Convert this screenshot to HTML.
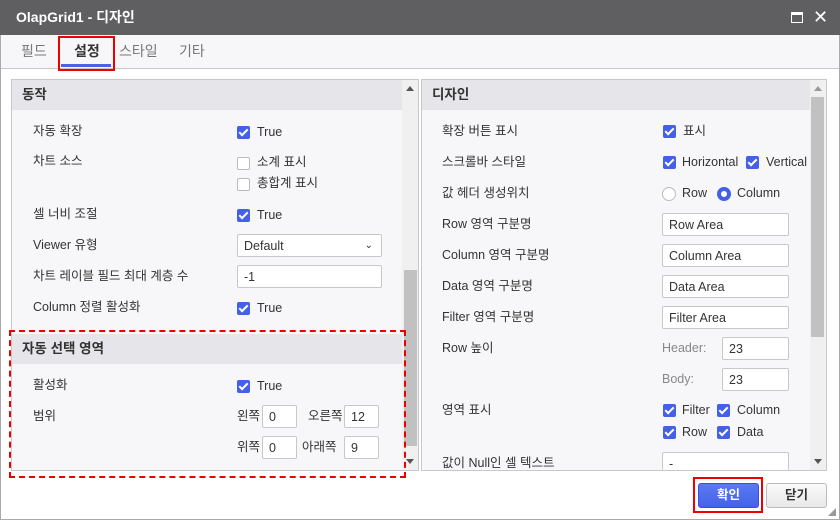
<!DOCTYPE html>
<html><head><meta charset="utf-8"><style>
*{box-sizing:border-box;margin:0;padding:0}
body{width:840px;height:520px;background:#fff;font-family:"Liberation Sans","Noto Sans CJK KR",sans-serif;font-size:12.5px;line-height:15px;color:#333;position:relative;overflow:hidden}
.a{position:absolute}
.win{left:0;top:0;width:840px;height:520px;border:1px solid #aaa}
.title{left:0;top:0;width:840px;height:35px;background:#5f5f61;color:#fff;font-weight:bold;font-size:14px;line-height:35px;padding-left:16px}
.tabs{left:1px;top:35px;width:838px;height:34px;background:#f7f7f9;border-bottom:1px solid #c8c8c8}
.tab{top:43px;font-size:14px;line-height:16px;color:#777}
.panel{background:#f7f7f9;border:1px solid #c8c8c8}
.hdr{background:#e6e6ea;font-weight:bold;font-size:13.5px;color:#333;padding-left:10px;line-height:30px;height:30px}
.sb{background:#f0f0f0}
.thumb{background:#c1c1c1}
.lbl{font-size:12.5px;line-height:15px;color:#333}
.cb{width:13px;height:13px;border-radius:2px;background:#4460e6;display:inline-block;position:absolute}
.cb:after{content:"";position:absolute;left:4px;top:1px;width:3px;height:7px;border:solid #fff;border-width:0 2px 2px 0;transform:rotate(45deg)}
.cbo{width:13px;height:13px;border-radius:2px;border:1px solid #bbb;background:#fff;position:absolute}
.inp{background:#fff;border:1px solid #c8c8c8;border-radius:2px;height:23px;line-height:22px;padding-left:6px;font-size:12.5px;color:#333}
</style></head><body>
<div class="a win"></div>
<div class="a title">OlapGrid1 - 디자인</div>
<div class="a" style="left:791px;top:12px;width:12px;height:11px;border:1.5px solid #fff;border-top-width:3px"></div>
<div class="a" style="left:813px;top:6px;color:#fff;font-size:18px;line-height:22px">✕</div>
<div class="a tabs"></div>
<div class="a tab" style="left:21px">필드</div>
<div class="a tab" style="left:74px;color:#333;font-weight:bold">설정</div>
<div class="a" style="left:61px;top:64px;width:50px;height:3px;background:#4a63e6"></div>
<div class="a" style="left:58px;top:36px;width:57px;height:35px;border:2px solid #e00"></div>
<div class="a tab" style="left:119px">스타일</div>
<div class="a tab" style="left:179px">기타</div>

<!-- left panel -->
<div class="a panel" style="left:11px;top:79px;width:408px;height:392px"></div>
<div class="a hdr" style="left:12px;top:80px;width:390px">동작</div>
<div class="a sb" style="left:402px;top:80px;width:16px;height:390px"></div>
<div class="a thumb" style="left:404px;top:270px;width:13px;height:176px"></div>
<div class="a" style="left:406px;top:86px;border:4px solid transparent;border-bottom:5px solid #555;border-top:0"></div>
<div class="a" style="left:406px;top:459px;border:4px solid transparent;border-top:5px solid #555;border-bottom:0"></div>

<div class="a lbl" style="left:33px;top:124px">자동 확장</div>
<div class="cb" style="left:237px;top:126px"></div><div class="a lbl" style="left:257px;top:125px">True</div>
<div class="a lbl" style="left:33px;top:154px">차트 소스</div>
<div class="cbo" style="left:237px;top:157px"></div><div class="a lbl" style="left:257px;top:155px">소계 표시</div>
<div class="cbo" style="left:237px;top:178px"></div><div class="a lbl" style="left:257px;top:176px">총합계 표시</div>
<div class="a lbl" style="left:33px;top:207px">셀 너비 조절</div>
<div class="cb" style="left:237px;top:209px"></div><div class="a lbl" style="left:257px;top:208px">True</div>
<div class="a lbl" style="left:33px;top:238px">Viewer 유형</div>
<div class="a inp" style="left:237px;top:234px;width:145px">Default<span style="position:absolute;right:8px;top:0;font-size:10px">&#8964;</span></div>
<div class="a lbl" style="left:33px;top:269px">차트 레이블 필드 최대 계층 수</div>
<div class="a inp" style="left:237px;top:265px;width:145px">-1</div>
<div class="a lbl" style="left:33px;top:300px">Column 정렬 활성화</div>
<div class="cb" style="left:237px;top:302px"></div><div class="a lbl" style="left:257px;top:301px">True</div>

<div class="a hdr" style="left:12px;top:334px;width:390px">자동 선택 영역</div>
<div class="a lbl" style="left:33px;top:378px">활성화</div>
<div class="cb" style="left:237px;top:380px"></div><div class="a lbl" style="left:257px;top:379px">True</div>
<div class="a lbl" style="left:33px;top:409px">범위</div>
<div class="a lbl" style="left:237px;top:409px">왼쪽</div>
<div class="a inp" style="left:262px;top:405px;width:35px">0</div>
<div class="a lbl" style="left:308px;top:409px">오른쪽</div>
<div class="a inp" style="left:344px;top:405px;width:35px">12</div>
<div class="a lbl" style="left:237px;top:440px">위쪽</div>
<div class="a inp" style="left:262px;top:436px;width:35px">0</div>
<div class="a lbl" style="left:302px;top:440px">아래쪽</div>
<div class="a inp" style="left:344px;top:436px;width:35px">9</div>
<div class="a" style="left:9px;top:330px;width:397px;height:148px;border:2px dashed #e00"></div>

<!-- right panel -->
<div class="a panel" style="left:421px;top:79px;width:406px;height:392px"></div>
<div class="a hdr" style="left:422px;top:80px;width:388px">디자인</div>
<div class="a sb" style="left:810px;top:80px;width:16px;height:390px"></div>
<div class="a thumb" style="left:811px;top:97px;width:13px;height:240px"></div>
<div class="a" style="left:814px;top:86px;border:4px solid transparent;border-bottom:5px solid #999;border-top:0"></div>
<div class="a" style="left:814px;top:459px;border:4px solid transparent;border-top:5px solid #555;border-bottom:0"></div>

<div class="a lbl" style="left:442px;top:124px">확장 버튼 표시</div>
<div class="cb" style="left:663px;top:125px"></div><div class="a lbl" style="left:683px;top:124px">표시</div>
<div class="a lbl" style="left:442px;top:155px">스크롤바 스타일</div>
<div class="cb" style="left:663px;top:156px"></div><div class="a lbl" style="left:682px;top:155px">Horizontal</div>
<div class="cb" style="left:746px;top:156px"></div><div class="a lbl" style="left:766px;top:155px">Vertical</div>
<div class="a lbl" style="left:442px;top:186px">값 헤더 생성위치</div>
<div class="a" style="left:662px;top:187px;width:14px;height:14px;border:1px solid #bbb;border-radius:50%;background:#fff"></div>
<div class="a lbl" style="left:682px;top:186px">Row</div>
<div class="a" style="left:717px;top:187px;width:14px;height:14px;border:4px solid #4460e6;border-radius:50%;background:#fff"></div>
<div class="a lbl" style="left:737px;top:186px">Column</div>
<div class="a lbl" style="left:442px;top:217px">Row 영역 구분명</div>
<div class="a inp" style="left:662px;top:213px;width:127px">Row Area</div>
<div class="a lbl" style="left:442px;top:248px">Column 영역 구분명</div>
<div class="a inp" style="left:662px;top:244px;width:127px">Column Area</div>
<div class="a lbl" style="left:442px;top:279px">Data 영역 구분명</div>
<div class="a inp" style="left:662px;top:275px;width:127px">Data Area</div>
<div class="a lbl" style="left:442px;top:310px">Filter 영역 구분명</div>
<div class="a inp" style="left:662px;top:306px;width:127px">Filter Area</div>
<div class="a lbl" style="left:442px;top:341px">Row 높이</div>
<div class="a lbl" style="left:662px;top:341px;color:#888">Header:</div>
<div class="a inp" style="left:722px;top:337px;width:67px">23</div>
<div class="a lbl" style="left:662px;top:372px;color:#888">Body:</div>
<div class="a inp" style="left:722px;top:368px;width:67px">23</div>
<div class="a lbl" style="left:442px;top:403px">영역 표시</div>
<div class="cb" style="left:663px;top:404px"></div><div class="a lbl" style="left:682px;top:403px">Filter</div>
<div class="cb" style="left:717px;top:404px"></div><div class="a lbl" style="left:737px;top:403px">Column</div>
<div class="cb" style="left:663px;top:426px"></div><div class="a lbl" style="left:682px;top:425px">Row</div>
<div class="cb" style="left:717px;top:426px"></div><div class="a lbl" style="left:737px;top:425px">Data</div>
<div class="a lbl" style="left:442px;top:456px;height:14px;overflow:hidden">값이 Null인 셀 텍스트</div>
<div class="a inp" style="left:662px;top:452px;width:127px;height:18px;border-bottom:0">-</div>

<!-- buttons -->
<div class="a" style="left:698px;top:483px;width:61px;height:25px;border-radius:3px;background:linear-gradient(#5a7af5,#4462e8);border:1px solid #3552d0;color:#fff;font-weight:bold;text-align:center;line-height:23px">확인</div>
<div class="a" style="left:693px;top:477px;width:70px;height:36px;border:2px solid #e00"></div>
<div class="a" style="left:766px;top:483px;width:61px;height:25px;border-radius:3px;background:linear-gradient(#fafafa,#e8e8e8);border:1px solid #bbb;color:#333;font-weight:bold;text-align:center;line-height:23px">닫기</div>
<div class="a" style="left:828px;top:508px;color:#999;font-size:8px;line-height:10px">◢</div>
</body></html>
